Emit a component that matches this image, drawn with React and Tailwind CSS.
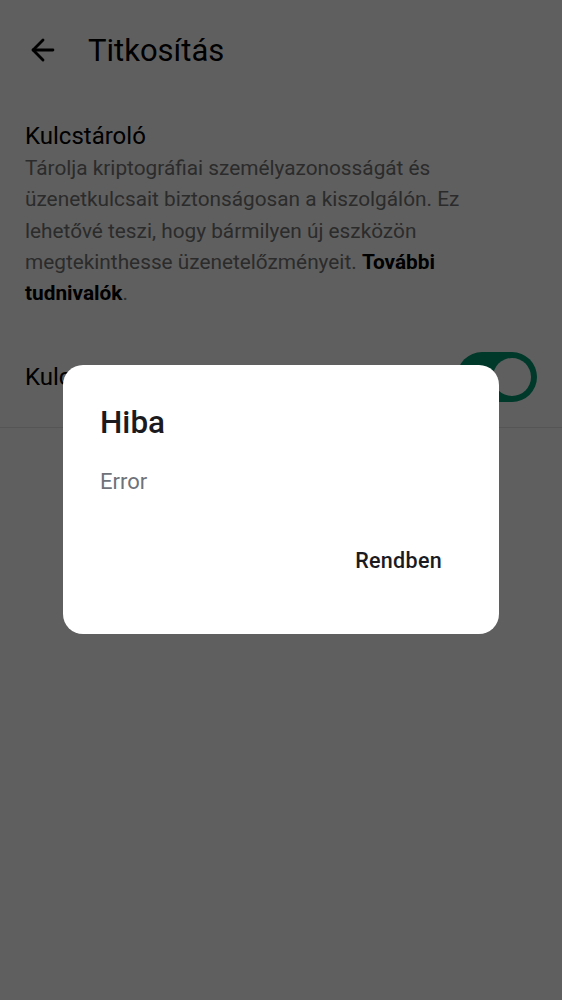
import { ArrowLeft } from "lucide-react";

const font = { fontFamily: "Roboto, 'Noto Sans', sans-serif" };

function Switch() {
  return (
    <div className="w-[80px] h-[50px] rounded-full bg-[#00966f] flex items-center justify-end pr-[6px] shrink-0">
      <div className="w-[38px] h-[38px] rounded-full bg-white" />
    </div>
  );
}

export default function App() {
  return (
    <div className="relative w-[562px] h-[1000px] bg-white overflow-hidden" style={font}>
      {/* page */}
      <div className="flex items-center h-[100px] pl-[26px]">
        <ArrowLeft size={34} strokeWidth={2} className="text-black" />
        <h1 className="ml-[28px] text-[31px] text-black leading-none">Titkosítás</h1>
      </div>

      <div className="px-[25px] pt-[20px]">
        <div className="text-[24px] text-black leading-[33px]">Kulcstároló</div>
        <p className="text-[20.8px] leading-[31.3px] text-[#747474]">
          Tárolja kriptográfiai személyazonosságát és üzenetkulcsait biztonságosan a kiszolgálón. Ez lehetővé teszi, hogy bármilyen új eszközön megtekinthesse üzenetelőzményeit.{" "}
          <span className="font-bold text-black">További tudnivalók</span>.
        </p>
      </div>

      <div className="flex items-center justify-between px-[25px] h-[102px] mt-[17px] border-b border-[#e4e4e4]">
        <span className="text-[24px] text-black">Kulcstároló engedélyezése</span>
        <Switch />
      </div>

      {/* scrim */}
      <div className="absolute inset-0 bg-black/[0.627]" />

      {/* dialog */}
      <div className="absolute left-[63px] top-[365px] w-[436px] h-[269px] bg-white rounded-[20px] flex flex-col pl-[37px] pr-[57px] pt-[36px]">
        <div className="text-[31.5px] text-[#1b1b1f] font-medium leading-[44px]">Hiba</div>
        <div className="mt-[22px] text-[22px] text-[#6e7279] leading-[30px]">Error</div>
        <div className="flex justify-end mt-[48px]">
          <span className="text-[21.5px] font-medium text-[#1b1b1f] tracking-[0.3px]">Rendben</span>
        </div>
      </div>
    </div>
  );
}
